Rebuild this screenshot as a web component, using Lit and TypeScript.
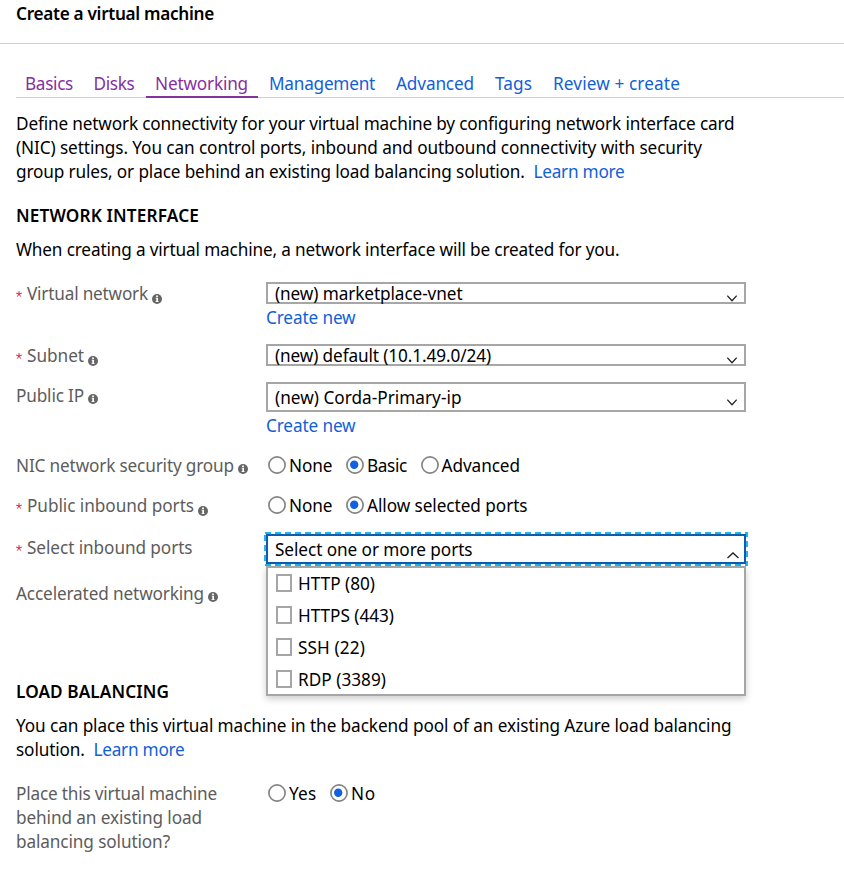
import { LitElement, html, css } from "lit";
import { customElement, property } from "lit/decorators.js";
import { classMap } from "lit/directives/class-map.js";

/** A single line of text, tracked so that it fills the given measure. */
@customElement("fit-line")
class FitLine extends LitElement {
  @property({ type: Number }) w = 0;
  @property() text = "";
  static styles = css`
    :host { display: inline-block; white-space: pre; }
  `;
  render() {
    return html`${this.text}`;
  }
  updated() {
    this.style.letterSpacing = "0px";
    const natural = this.getBoundingClientRect().width;
    this.style.letterSpacing = `${(this.w - natural) / this.text.length}px`;
  }
}

const line = (text: string, w: number) => html`<fit-line .text=${text} .w=${w}></fit-line>`;

@customElement("info-icon")
class InfoIcon extends LitElement {
  static styles = css`
    :host { display: block; width: 10px; height: 10px; }
    svg { display: block; }
  `;
  render() {
    return html`<svg width="10" height="10" viewBox="0 0 10 10">
      <circle cx="5" cy="5" r="5" fill="#666"></circle>
      <path d="M4.1 1.5h1.8v1.5H4.1zM3.6 3.8H6v3.5h.6V8H3.5v-.7h.8V4.5h-.7z" fill="#fff"></path>
    </svg>`;
  }
}

@customElement("field-label")
class FieldLabel extends LitElement {
  @property() text = "";
  @property({ type: Number }) w = 0;
  @property({ type: Boolean }) required = false;
  @property() info = "";
  static styles = css`
    :host { display: flex; align-items: center; height: 24px; color: #5c5c5c; }
    .star { width: 11px; }
    .star svg { display: block; }
    .low { margin: 9px 0 0 4px; }
    .mid { margin: 5px 0 0 4px; }
  `;
  render() {
    return html`
      ${this.required
        ? html`<span class="star"><svg width="6" height="6" viewBox="0 0 6 6"><path d="M3 3V.1M3 3 .2 2.2M3 3l2.8-.8M3 3 1.3 5.6M3 3l1.7 2.6" stroke="#e8203a" stroke-width="1" fill="none"></path></svg></span>`
        : ""}
      ${line(this.text, this.w)}
      ${this.info ? html`<info-icon class=${this.info}></info-icon>` : ""}
    `;
  }
}

@customElement("select-box")
class SelectBox extends LitElement {
  @property() text = "";
  @property({ type: Number }) w = 0;
  @property({ type: Boolean, reflect: true }) tall = false;
  @property({ type: Boolean, reflect: true }) open = false;
  static styles = css`
    :host {
      display: flex; justify-content: space-between; align-items: center;
      box-sizing: border-box; width: 480px; height: 22px; padding: 0 7px 0 7px;
      border: 2px solid #a6a6a6; background: #fff; line-height: 20px;
    }
    :host([tall]) { height: 30px; }
    :host([open]) { border-color: #0f5bb0; }
    fit-line { margin-top: 1px; }
    .chevron { display: block; margin-top: 11px; }
    :host([open]) .chevron { margin-right: -2px; margin-top: 12px; }
  `;
  render() {
    return html`${line(this.text, this.w)}
      ${this.open
        ? html`<svg class="chevron" width="12" height="7" viewBox="0 0 12 7"><path d="M.5 6 6 .9 11.5 6" fill="none" stroke="#222" stroke-width="1.3"></path></svg>`
        : html`<svg class="chevron" width="10" height="7" viewBox="0 0 10 7"><path d="M.3 .7 5 5.7 9.7 .7" fill="none" stroke="#222" stroke-width="1.3"></path></svg>`}`;
  }
}

@customElement("radio-option")
class RadioOption extends LitElement {
  @property() text = "";
  @property({ type: Number }) w = 0;
  @property({ type: Boolean }) checked = false;
  static styles = css`
    :host { display: flex; align-items: center; height: 24px; }
    svg { display: block; margin: -2px 3px 0 0; }
  `;
  render() {
    return html`<svg width="18" height="18" viewBox="0 0 18 18">
        <circle cx="9" cy="9" r="8.1" fill="#fff" stroke="#858585" stroke-width="1.7"></circle>
        <circle cx="8.2" cy="8.7" r=${this.checked ? 4.2 : 0} fill="#1160e0"></circle>
      </svg>${line(this.text, this.w)}`;
  }
}

const tabs: [string, number, string][] = [
  ["Basics", 48, "visited"],
  ["Disks", 41, "visited"],
  ["Networking", 93, "active"],
  ["Management", 106, ""],
  ["Advanced", 78, ""],
  ["Tags", 37, ""],
  ["Review + create", 127, ""],
];

const ports: [string, number][] = [
  ["HTTP (80)", 77],
  ["HTTPS (443)", 96],
  ["SSH (22)", 67],
  ["RDP (3389)", 88],
];

@customElement("app-root")
class AppRoot extends LitElement {
  static styles = css`
    :host {
      display: block; box-sizing: border-box; height: 874px; overflow: hidden;
      background: #fff; color: #000;
      font: 17.2px/24px "Noto Sans", "Open Sans", sans-serif;
    }
    .title { height: 41px; padding: 2px 0 0 16px; margin: 0; border-bottom: 1px solid #d2d2d2; font: inherit; font-weight: 600; }
    .tabs {
      display: grid; grid-template-columns: 68.5px 61.5px 114px 127px 99px 58px 1fr;
      height: 26px; margin: 27px 0 0 16px; border-bottom: 1px solid #d0d0d0;
    }
    .tab { box-sizing: border-box; height: 27px; padding: 1px 0 0 9px; color: #1160d8; }
    .tab.visited, .tab.active { color: #86309f; }
    .tab.active { width: 112px; border-bottom: 2px solid #86309f; }
    .body { padding-left: 16px; }
    .text { display: flex; flex-direction: column; align-items: flex-start; margin: 0; }
    .intro { padding-top: 14px; }
    h2 { margin: 20px 0 10px; font: inherit; font-weight: 600; height: 24px; }
    a { color: #1160d8; }
    .inline { display: flex; }
    .row { display: grid; grid-template-columns: 250px 480px; }
    .vnet { margin-top: 20px; height: 62px; }
    .subnet { height: 38px; }
    .ip { height: 72px; }
    .sel { display: flex; flex-direction: column; align-items: flex-start; gap: 2px; }
    .nsg, .inbound { height: 40px; }
    .radios { display: flex; padding-left: 2px; gap: 13.5px; }
    .select-ports { height: 48px; }
    .select-ports field-label, .ip field-label { margin-top: 2px; }
    .focus { position: relative; height: 30px; }
    .ring { position: absolute; left: -2px; top: -2px; width: 484px; height: 34px; }
    .menu {
      position: absolute; left: 0; top: 32px; z-index: 1; box-sizing: border-box;
      width: 480px; height: 130px; padding: 0 8px; border: 2px solid #a6a6a6;
      background: #fff; box-shadow: 0 3px 7px rgba(0, 0, 0, 0.2);
    }
    .item { display: flex; align-items: center; gap: 6px; height: 32px; }
    .box { box-sizing: border-box; width: 16px; height: 18px; margin-top: -2px; border: 2px solid #a6a6a6; }
    .accel { height: 78px; }
    .lb { margin-top: 20px; }
    .long { display: flex; flex-direction: column; align-items: flex-start; color: #5c5c5c; }
  `;

  render() {
    return html`
      <h1 class="title">${line("Create a virtual machine", 198)}</h1>
      <nav class="tabs">
        ${tabs.map(([t, w, kind]) => html`<div class=${classMap({ tab: true, [kind || "next"]: true })}>${line(t, w)}</div>`)}
      </nav>
      <main class="body">
        <div class="text intro">
          ${line("Define network connectivity for your virtual machine by configuring network interface card", 718.5)}
          ${line("(NIC) settings. You can control ports, inbound and outbound connectivity with security", 686)}
          <div class="inline">${line("group rules, or place behind an existing load balancing solution.  ", 517.5)}<a>${line("Learn more", 91)}</a></div>
        </div>
        <h2>${line("NETWORK INTERFACE", 183)}</h2>
        <div class="text">${line("When creating a virtual machine, a network interface will be created for you.", 603.5)}</div>

        <div class="row vnet">
          <field-label required text="Virtual network" .w=${121} info="low"></field-label>
          <div class="sel"><select-box text="(new) marketplace-vnet" .w=${187.5}></select-box><a>${line("Create new", 89.5)}</a></div>
        </div>
        <div class="row subnet">
          <field-label required text="Subnet" .w=${57} info="low"></field-label>
          <div class="sel"><select-box text="(new) default (10.1.49.0/24)" .w=${216}></select-box></div>
        </div>
        <div class="row ip">
          <field-label text="Public IP" .w=${68} info="mid"></field-label>
          <div class="sel"><select-box tall text="(new) Corda-Primary-ip" .w=${186.5}></select-box><a>${line("Create new", 89.5)}</a></div>
        </div>
        <div class="row nsg">
          <field-label text="NIC network security group" .w=${218} info="mid"></field-label>
          <div class="radios">
            <radio-option text="None" .w=${43.5}></radio-option>
            <radio-option checked text="Basic" .w=${40}></radio-option>
            <radio-option text="Advanced" .w=${78.5}></radio-option>
          </div>
        </div>
        <div class="row inbound">
          <field-label required text="Public inbound ports" .w=${167} info="low"></field-label>
          <div class="radios">
            <radio-option text="None" .w=${43.5}></radio-option>
            <radio-option checked text="Allow selected ports" .w=${160.5}></radio-option>
          </div>
        </div>
        <div class="row select-ports">
          <field-label required text="Select inbound ports" .w=${165.5}></field-label>
          <div class="focus">
            <select-box tall open text="Select one or more ports" .w=${197.5}></select-box>
            <svg class="ring" viewBox="0 0 484 34"><rect x="1" y="1" width="482" height="32" fill="none" stroke="#1fb6ee" stroke-width="2" stroke-dasharray="6 4"></rect></svg>
            <div class="menu">
              ${ports.map(([t, w]) => html`<div class="item"><span class="box"></span>${line(t, w)}</div>`)}
            </div>
          </div>
        </div>
        <div class="row accel">
          <field-label text="Accelerated networking" .w=${188} info="mid"></field-label>
        </div>
        <h2>${line("LOAD BALANCING", 153)}</h2>
        <div class="text">
          ${line("You can place this virtual machine in the backend pool of an existing Azure load balancing", 715.5)}
          <div class="inline">${line("solution.  ", 77.5)}<a>${line("Learn more", 91)}</a></div>
        </div>
        <div class="row lb">
          <div class="long">
            ${line("Place this virtual machine", 201)}
            ${line("behind an existing load", 186)}
            ${line("balancing solution?", 154)}
          </div>
          <div class="radios">
            <radio-option text="Yes" .w=${27.5}></radio-option>
            <radio-option checked text="No" .w=${25}></radio-option>
          </div>
        </div>
      </main>
    `;
  }
}
